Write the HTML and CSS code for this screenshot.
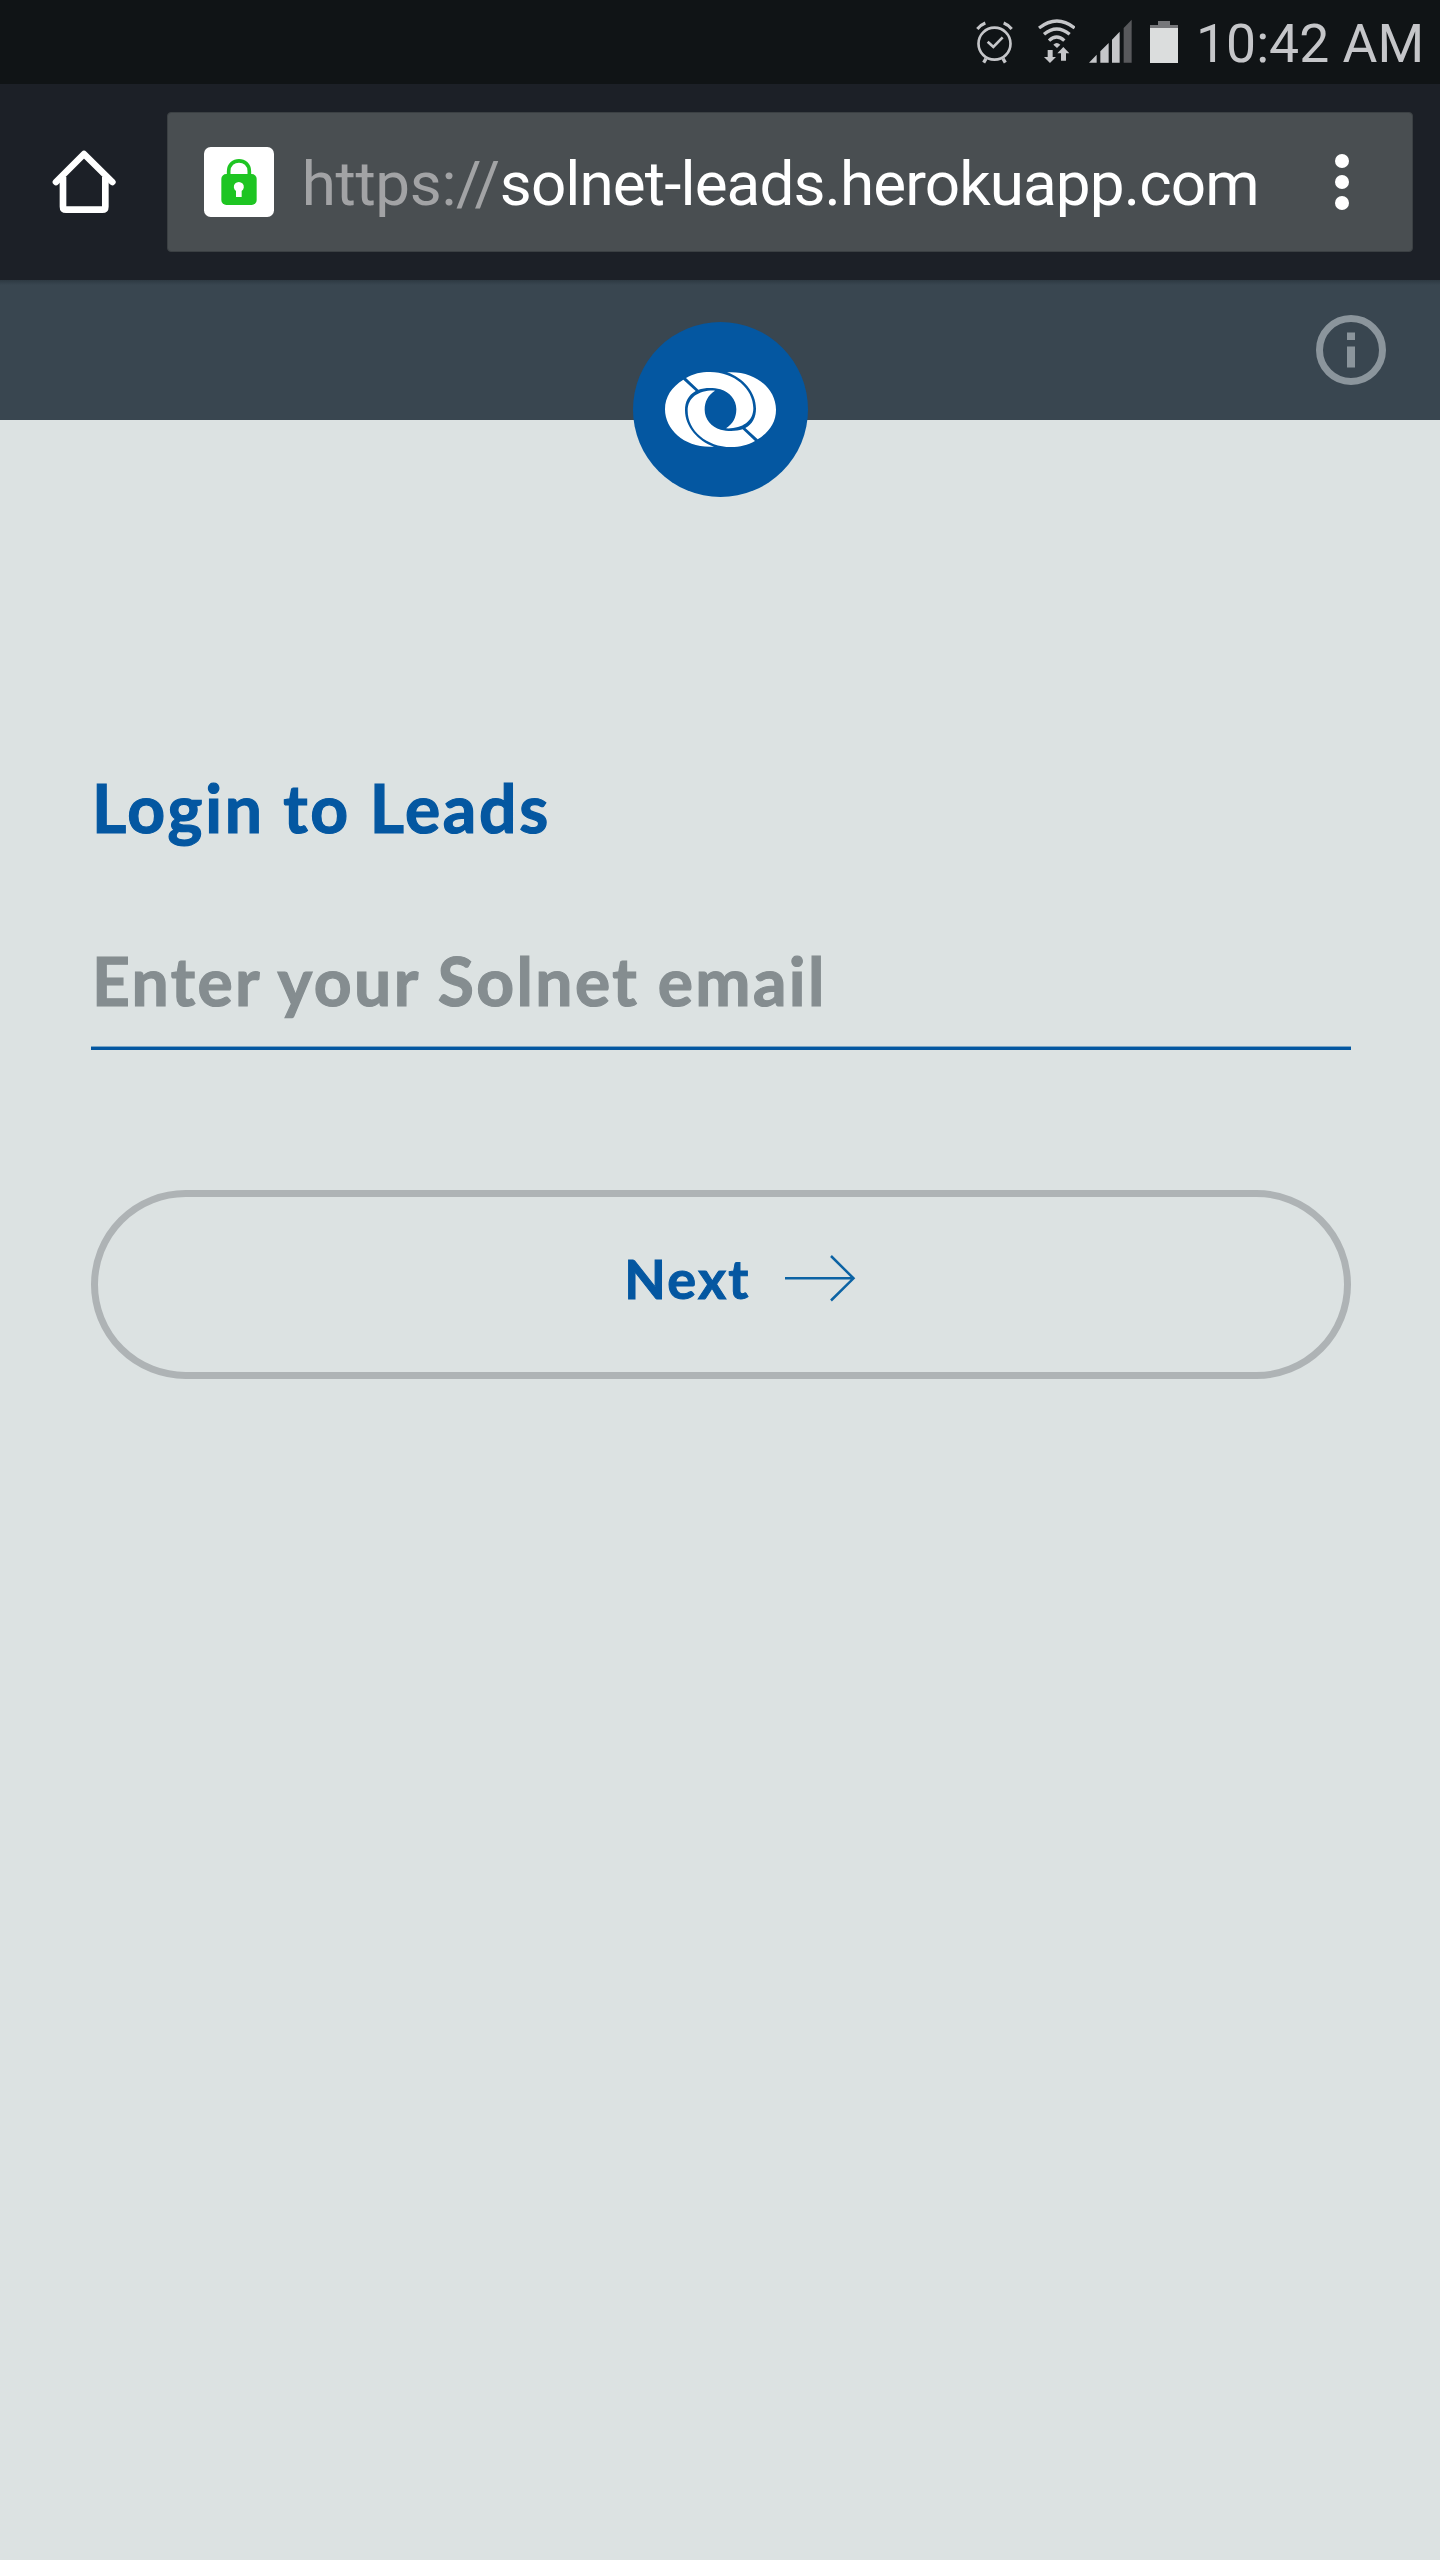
FILE: index.html
```html
<!DOCTYPE html>
<html lang="en">
<head>
<meta charset="utf-8">
<title>Leads</title>
<link rel="stylesheet" href="styles.css">
</head>
<body>
<div class="status-bar">
  <svg class="alarm" viewBox="48 0 112 252" fill="none" stroke="#c5c6c9" aria-hidden="true">
    <circle cx="103.500" cy="131" r="48" stroke-width="8"/>
    <path d="M83 125l17 16 28-29" stroke-width="8"/>
    <path d="M52 87q9-12 24-18M155 87q-9-12-24-18" stroke-width="9"/>
    <path d="M78 176l-7 12M129 176l7 12" stroke-width="10"/>
  </svg>
  <svg class="wifi" viewBox="233 0 112 252" fill="none" stroke="#c5c6c9" stroke-width="10" aria-hidden="true">
    <path d="M236 84q54-42 107 0M251 103q38-32 77 0M266 122q23-22 46 0"/>
    <path d="M279 134q10-10 21 0l-10 10z" fill="#c5c6c9" stroke="none"/>
    <path d="M262 150h15v21h10l-18 18-18-18h11zM302 182v-22h-11l18-19 18 19h-10v22z" fill="#c5c6c9" stroke="none"/>
  </svg>
  <svg class="signal" viewBox="388 0 128 252" fill="#c5c6c9" aria-hidden="true">
    <path d="M388 188l23-24v24zM422 188v-34l25-25v59zM457 188v-69l23-24v93z"/>
    <path d="M492 188V84l24-25v129z" fill="#58595c"/>
  </svg>
  <svg class="battery" viewBox="570 0 84 252" aria-hidden="true">
    <path d="M570 84v-9h24V63h36v12h24v9z" fill="#76777a"/>
    <path d="M570 84h84v105h-84z" fill="#dbdddd"/>
  </svg>
  <span class="clock">10:42 AM</span>
</div>
<div class="toolbar">
  <svg class="home" viewBox="156 178 194 196" fill="none" stroke="#fff" stroke-width="20" stroke-linecap="round" stroke-linejoin="round" aria-hidden="true">
    <path d="M168 277l84-84 85 84"/>
    <path d="M189 262v89q0 9 9 9h109q9 0 9-9v-89" stroke-linecap="butt"/>
  </svg>
  <div class="address">
    <svg class="lock" viewBox="612 171 210 210" aria-hidden="true">
      <rect x="612" y="171" width="210" height="210" rx="20" fill="#fff"/>
      <path d="M686 260v-16c0-42 62-42 62 0v16" fill="none" stroke="#1ec522" stroke-width="11"/>
      <rect x="664" y="252" width="106" height="93" rx="15" fill="#1ec522"/>
      <path d="M708 321v-18a15 15 0 1 1 17 0v18z" fill="#fff"/>
    </svg>
    <span class="url"><span class="scheme">https://</span>solnet-leads.herokuapp.com</span>
    <svg class="more" viewBox="0 0 14 56" fill="#fff" aria-hidden="true">
      <circle cx="7" cy="7" r="7"/><circle cx="7" cy="28" r="7"/><circle cx="7" cy="49" r="7"/>
    </svg>
  </div>
</div>
<header class="app-header">
  <svg class="logo" viewBox="41 66 525 525" aria-label="Solnet">
    <defs>
      <g id="half">
        <path d="M192 239L229 273C207 285 197 306 197 331C197 380 236 424 284 440C199 446 137 391 137 328C137 290 157 261 192 239Z"/>
        <path d="M200 234C222 221 245 216 272 216C345 216 402 266 402 325C402 366 366 387 320 385C341 372 351 352 351 328C351 300 331 276 303 268C281 262 256 263 237 269Z"/>
      </g>
    </defs>
    <circle cx="303.500" cy="328.500" r="262.500" fill="#0457a1"/>
    <g fill="#fff"><use href="#half"/><use href="#half" transform="rotate(180 303.500 328.500)"/></g>
  </svg>
  <svg class="info" viewBox="0 0 70 70" fill="#8b959c" aria-label="Information">
    <circle cx="35" cy="35" r="31.500" fill="none" stroke="#8b959c" stroke-width="7"/>
    <path d="M31 17.500h8v7.500h-8zM31 31.500h8v21h-8z"/>
  </svg>
</header>
<main class="login">
  <h1 class="title">Login to Leads</h1>
  <input class="email" type="email" placeholder="Enter your Solnet email">
  <button class="next" type="button">
    <span class="next-label">Next</span>
    <svg class="arrow" viewBox="0 0 71 48" fill="none" stroke="#0c63a4" stroke-width="2.500" aria-hidden="true">
      <path d="M0 24.300h69M46 2l22.500 22.300L46 46.500"/>
    </svg>
  </button>
</main>
</body>
</html>
```

FILE: styles.css
```css
* { box-sizing: border-box; }

body {
  margin: 0;
  min-height: 2560px;
  background: #dce2e2;
  font-family: Lato, "Open Sans", sans-serif;
}

svg { display: block; flex: none; }

.status-bar {
  display: flex;
  justify-content: flex-end;
  height: 84px;
  background: #101416;
  font-family: Roboto, sans-serif;
}
.status-bar svg { height: 84px; }
.alarm { width: 37.33px; margin-right: 24.33px; }
.wifi { width: 37.33px; margin-right: 14.33px; }
.signal { width: 42.67px; margin-right: 18px; }
.battery { width: 28px; }
.clock {
  width: 262px;
  padding-left: 18px;
  font-size: 53.5px;
  line-height: 87px;
  color: #c5c6c9;
  white-space: nowrap;
}

.toolbar {
  display: flex;
  align-items: center;
  height: 196px;
  padding: 0 27px 0 52px;
  background: #1c2027;
  font-family: Roboto, sans-serif;
}
.home { width: 64.67px; height: 65.33px; }
.address {
  display: flex;
  align-items: center;
  flex: 1;
  height: 140px;
  margin-left: 50.5px;
  padding: 0 63px 0 35.5px;
  border: 1px solid #3b4043;
  border-radius: 4px;
  background: #494e51;
}
.lock { width: 70px; height: 70px; }
.url {
  flex: 1;
  margin-left: 28px;
  padding-top: 3px;
  font-size: 62px;
  line-height: 72px;
  letter-spacing: -0.9px;
  color: #fff;
  white-space: nowrap;
}
.scheme { letter-spacing: -0.35px; color: #a2a3a5; }
.more { width: 14px; height: 56px; }

.app-header {
  position: relative;
  display: flex;
  justify-content: flex-end;
  align-items: center;
  height: 140px;
  padding-right: 54px;
  background: linear-gradient(#2d3942, #394650 5px);
}
.logo {
  position: absolute;
  top: 42px;
  left: 633.4px;
  width: 175px;
  height: 175px;
}
.info { width: 70px; height: 70px; }

.login {
  display: flex;
  flex-direction: column;
  padding: 340px 89px 0 91px;
}
.title {
  margin: 0;
  padding-left: 1px;
  font-size: 66px;
  line-height: 96px;
  font-weight: 700;
  letter-spacing: 2.7px;
  -webkit-text-stroke: 1.2px #0457a1;
  color: #0457a1;
}
.email {
  height: 130px;
  margin: 64px 0 0;
  padding: 0 0 7px 1px;
  border: 0;
  border-bottom: 3px solid #0457a1;
  background: linear-gradient(#7aa5c5, #7aa5c5) bottom / 100% 1px no-repeat;
  border-radius: 0;
  font: 700 66px/96px Lato, "Open Sans", sans-serif;
  letter-spacing: 2.4px;
}
.email::placeholder {
  color: #858d90;
  opacity: 1;
  -webkit-text-stroke: 1.2px #858d90;
}
.next {
  display: flex;
  justify-content: center;
  align-items: center;
  height: 189px;
  margin-top: 140px;
  padding: 0 0 14px 38px;
  border: 7px solid #aeb3b5;
  border-radius: 95px;
  background: transparent;
  font: 700 54px/66px Lato, "Open Sans", sans-serif;
  letter-spacing: 2.2px;
  color: #0457a1;
}
.next-label {
  padding-top: 2px;
  -webkit-text-stroke: 1px #0457a1;
}
.arrow { width: 71px; height: 48px; margin-left: 34px; }
```
